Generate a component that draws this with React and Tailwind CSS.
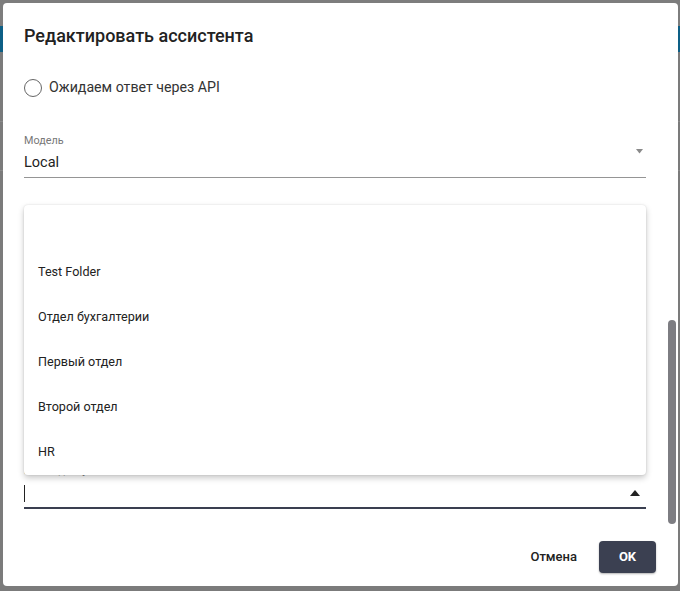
export default function App() {
  const items = ["", "Test Folder", "Отдел бухгалтерии", "Первый отдел", "Второй отдел", "HR"];
  return (
    <div className="relative w-[680px] h-[591px] overflow-hidden bg-[#7b7b7b]" style={{ fontFamily: "Roboto, 'Noto Sans', sans-serif" }}>
      {/* dimmed background page */}
      <div className="h-[26px] bg-[#7d7d7d]" />
      <div className="h-[26px] bg-[#0d5f86]" />
      <div className="h-[70px] border-b border-[#8a8a8a]" />
      <div className="h-[49px] border-b border-[#8a8a8a]" />

      {/* dialog */}
      <div className="absolute left-[3px] top-[3px] w-[675px] h-[583px] bg-white rounded-[4px] flex flex-col">
        <div className="flex-1 flex flex-col px-[21px] pt-[21px] relative">
          <div className="text-[18px] leading-[24px] font-medium text-[#222]">Редактировать ассистента</div>

          <div className="mt-[30px] flex items-center h-[20px]">
            <div className="w-[18px] h-[18px] rounded-full border-[1.5px] border-[#666] shrink-0" />
            <span className="ml-[7px] text-[14.2px] text-[#333]">Ожидаем ответ через API</span>
          </div>

          <div className="mt-[36px] w-[622px]">
            <div className="text-[10.8px] leading-[14px] text-[#777]">Модель</div>
            <div className="relative flex items-center h-[20px] mt-[5px] mb-[4px]">
              <span className="text-[14.5px] text-[#222]">Local</span>
              <svg className="absolute right-[3px] top-[-4px]" width="7" height="5" viewBox="0 0 7 5">
                <path d="M0 0 H7 L3.5 4.5 Z" fill="#8a8a8a" />
              </svg>
            </div>
            <div className="h-px bg-[#959595]" />
          </div>

          <div className="mt-[286px] w-[622px]">
            <div className="text-[10.8px] leading-[14px] text-[#777]">Папки доступа</div>
            <div className="relative flex items-center h-[22px] mt-[4px] mb-[3px]">
              <div className="w-px h-[17px] bg-[#222]" />
              <svg className="absolute right-[6px] top-[8px]" width="10" height="6" viewBox="0 0 10 6">
                <path d="M0 6 H10 L5 0 Z" fill="#222" />
              </svg>
            </div>
            <div className="h-[2px] bg-[#3a3f50]" />
          </div>

          {/* scrollbar */}
          <div className="absolute right-[2px] top-[317px] w-[8px] h-[204px] rounded-full bg-[#7d7d82]" />

          {/* dropdown popup */}
          <div className="absolute left-[21px] top-[202px] w-[622px] h-[270px] bg-white rounded-[4px] shadow-[0_3px_6px_rgba(0,0,0,0.22),0_0_2px_rgba(0,0,0,0.12)] flex flex-col">
            {items.map((t, i) => (
              <div key={i} className="h-[45px] flex items-center px-[14px] text-[12.6px] text-[#222]">{t}</div>
            ))}
          </div>
        </div>

        <div className="flex justify-end items-center gap-[10px] pr-[22px] pb-[13px]">
          <button className="h-[32px] px-[12px] text-[13px] font-medium text-[#222]">Отмена</button>
          <button className="h-[32px] w-[57px] rounded-[4px] bg-[#3b4051] text-white text-[13px] font-bold shadow-[0_1px_2px_rgba(0,0,0,0.3)]">OK</button>
        </div>
      </div>
    </div>
  );
}
